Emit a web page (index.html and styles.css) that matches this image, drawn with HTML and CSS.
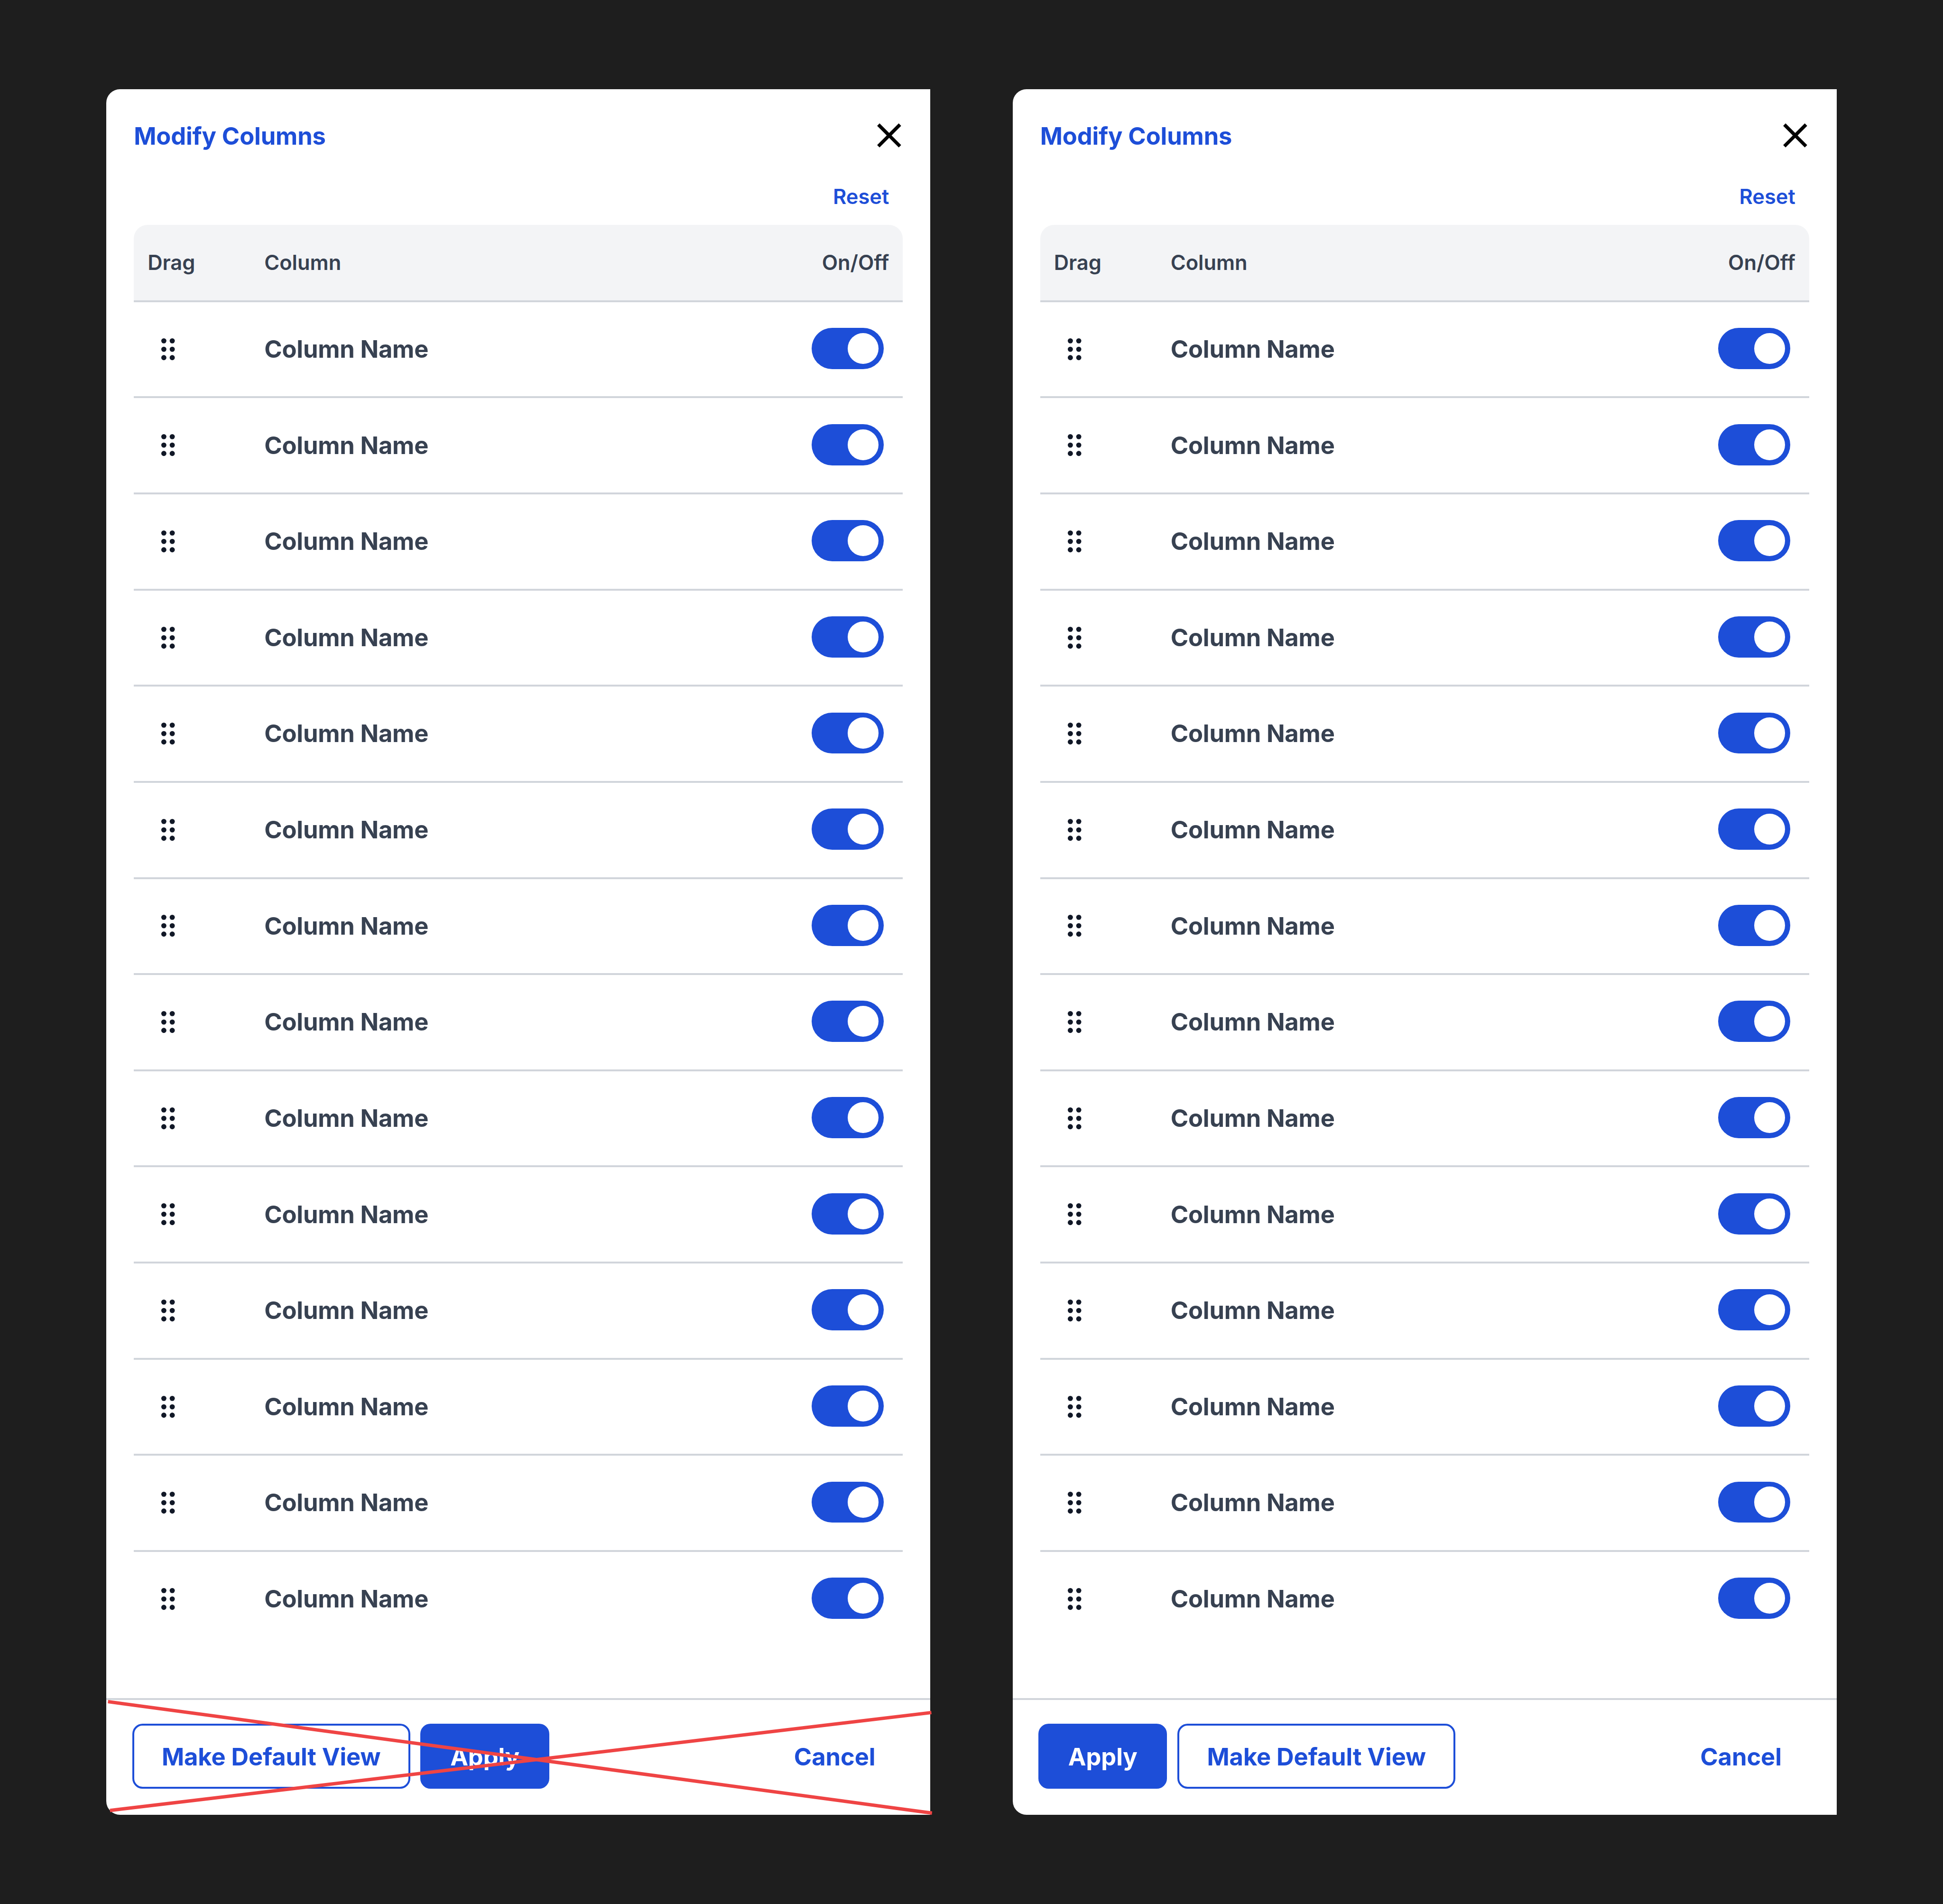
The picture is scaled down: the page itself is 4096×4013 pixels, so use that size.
FILE: index.html
```html
<!DOCTYPE html>
<html lang="en">
<head>
<meta charset="utf-8">
<title>Modify Columns</title>
<link rel="stylesheet" href="styles.css">
</head>
<body>
<svg class="sprite" aria-hidden="true">
  <symbol id="grip" viewBox="0 0 24 24">
    <circle cx="9.5" cy="7" r="1.5"/><circle cx="14.4" cy="7" r="1.5"/>
    <circle cx="9.5" cy="11.9" r="1.5"/><circle cx="14.4" cy="11.9" r="1.5"/>
    <circle cx="9.5" cy="16.8" r="1.5"/><circle cx="14.4" cy="16.8" r="1.5"/>
  </symbol>
  <symbol id="close" viewBox="0 0 24 24">
    <path d="M19 6.41 17.59 5 12 10.59 6.41 5 5 6.41 10.59 12 5 17.59 6.41 19 12 13.41 17.59 19 19 17.59 13.41 12z"/>
  </symbol>
</svg>
<main class="canvas">
  <section class="panel">
    <header class="panel-header"><h2 class="title">Modify Columns</h2><svg class="icon close"><use href="#close"/></svg></header>
    <div class="reset-row"><a class="reset">Reset</a></div>
    <div class="table">
      <div class="table-head"><span class="col-drag">Drag</span><span class="col-name">Column</span><span>On/Off</span></div>
      <div class="row"><span class="col-drag"><svg class="icon"><use href="#grip"/></svg></span><span class="col-name">Column Name</span><span class="toggle"><span class="knob"></span></span></div>
      <div class="row"><span class="col-drag"><svg class="icon"><use href="#grip"/></svg></span><span class="col-name">Column Name</span><span class="toggle"><span class="knob"></span></span></div>
      <div class="row"><span class="col-drag"><svg class="icon"><use href="#grip"/></svg></span><span class="col-name">Column Name</span><span class="toggle"><span class="knob"></span></span></div>
      <div class="row"><span class="col-drag"><svg class="icon"><use href="#grip"/></svg></span><span class="col-name">Column Name</span><span class="toggle"><span class="knob"></span></span></div>
      <div class="row"><span class="col-drag"><svg class="icon"><use href="#grip"/></svg></span><span class="col-name">Column Name</span><span class="toggle"><span class="knob"></span></span></div>
      <div class="row"><span class="col-drag"><svg class="icon"><use href="#grip"/></svg></span><span class="col-name">Column Name</span><span class="toggle"><span class="knob"></span></span></div>
      <div class="row"><span class="col-drag"><svg class="icon"><use href="#grip"/></svg></span><span class="col-name">Column Name</span><span class="toggle"><span class="knob"></span></span></div>
      <div class="row"><span class="col-drag"><svg class="icon"><use href="#grip"/></svg></span><span class="col-name">Column Name</span><span class="toggle"><span class="knob"></span></span></div>
      <div class="row"><span class="col-drag"><svg class="icon"><use href="#grip"/></svg></span><span class="col-name">Column Name</span><span class="toggle"><span class="knob"></span></span></div>
      <div class="row"><span class="col-drag"><svg class="icon"><use href="#grip"/></svg></span><span class="col-name">Column Name</span><span class="toggle"><span class="knob"></span></span></div>
      <div class="row"><span class="col-drag"><svg class="icon"><use href="#grip"/></svg></span><span class="col-name">Column Name</span><span class="toggle"><span class="knob"></span></span></div>
      <div class="row"><span class="col-drag"><svg class="icon"><use href="#grip"/></svg></span><span class="col-name">Column Name</span><span class="toggle"><span class="knob"></span></span></div>
      <div class="row"><span class="col-drag"><svg class="icon"><use href="#grip"/></svg></span><span class="col-name">Column Name</span><span class="toggle"><span class="knob"></span></span></div>
      <div class="row"><span class="col-drag"><svg class="icon"><use href="#grip"/></svg></span><span class="col-name">Column Name</span><span class="toggle"><span class="knob"></span></span></div>
    </div>
    <footer class="panel-footer">
      <button class="btn btn-outline">Make Default View</button>
      <button class="btn btn-primary">Apply</button>
      <button class="btn btn-text">Cancel</button>
      <svg class="strike" viewBox="0 0 1920 272"><path d="M4 8.3 1924.3 268M8.6 261.8 1922.9 33.7"/></svg>
    </footer>
  </section>
  <section class="panel">
    <header class="panel-header"><h2 class="title">Modify Columns</h2><svg class="icon close"><use href="#close"/></svg></header>
    <div class="reset-row"><a class="reset">Reset</a></div>
    <div class="table">
      <div class="table-head"><span class="col-drag">Drag</span><span class="col-name">Column</span><span>On/Off</span></div>
      <div class="row"><span class="col-drag"><svg class="icon"><use href="#grip"/></svg></span><span class="col-name">Column Name</span><span class="toggle"><span class="knob"></span></span></div>
      <div class="row"><span class="col-drag"><svg class="icon"><use href="#grip"/></svg></span><span class="col-name">Column Name</span><span class="toggle"><span class="knob"></span></span></div>
      <div class="row"><span class="col-drag"><svg class="icon"><use href="#grip"/></svg></span><span class="col-name">Column Name</span><span class="toggle"><span class="knob"></span></span></div>
      <div class="row"><span class="col-drag"><svg class="icon"><use href="#grip"/></svg></span><span class="col-name">Column Name</span><span class="toggle"><span class="knob"></span></span></div>
      <div class="row"><span class="col-drag"><svg class="icon"><use href="#grip"/></svg></span><span class="col-name">Column Name</span><span class="toggle"><span class="knob"></span></span></div>
      <div class="row"><span class="col-drag"><svg class="icon"><use href="#grip"/></svg></span><span class="col-name">Column Name</span><span class="toggle"><span class="knob"></span></span></div>
      <div class="row"><span class="col-drag"><svg class="icon"><use href="#grip"/></svg></span><span class="col-name">Column Name</span><span class="toggle"><span class="knob"></span></span></div>
      <div class="row"><span class="col-drag"><svg class="icon"><use href="#grip"/></svg></span><span class="col-name">Column Name</span><span class="toggle"><span class="knob"></span></span></div>
      <div class="row"><span class="col-drag"><svg class="icon"><use href="#grip"/></svg></span><span class="col-name">Column Name</span><span class="toggle"><span class="knob"></span></span></div>
      <div class="row"><span class="col-drag"><svg class="icon"><use href="#grip"/></svg></span><span class="col-name">Column Name</span><span class="toggle"><span class="knob"></span></span></div>
      <div class="row"><span class="col-drag"><svg class="icon"><use href="#grip"/></svg></span><span class="col-name">Column Name</span><span class="toggle"><span class="knob"></span></span></div>
      <div class="row"><span class="col-drag"><svg class="icon"><use href="#grip"/></svg></span><span class="col-name">Column Name</span><span class="toggle"><span class="knob"></span></span></div>
      <div class="row"><span class="col-drag"><svg class="icon"><use href="#grip"/></svg></span><span class="col-name">Column Name</span><span class="toggle"><span class="knob"></span></span></div>
      <div class="row"><span class="col-drag"><svg class="icon"><use href="#grip"/></svg></span><span class="col-name">Column Name</span><span class="toggle"><span class="knob"></span></span></div>
    </div>
    <footer class="panel-footer">
      <button class="btn btn-primary">Apply</button>
      <button class="btn btn-outline">Make Default View</button>
      <button class="btn btn-text">Cancel</button>
    </footer>
  </section>
</main>
</body>
</html>
```
FILE: styles.css
```css
/* 1rem is ten layout units */
html {
  font-size: 36.1837px;
}

*, *::before, *::after {
  box-sizing: border-box;
}

body {
  margin: 0;
  background: #1e1e1e;
  font-family: Inter, "Liberation Sans", sans-serif;
  color: #374151;
}

.sprite {
  display: none;
}

.canvas {
  display: flex;
  gap: 4.8rem;
  height: 4013px;
  padding: 5.2rem 0 0 6.2rem;
  overflow: hidden;
}

.panel {
  display: flex;
  flex: none;
  flex-direction: column;
  width: 48rem;
  height: 100.5rem;
  background: #fff;
  border-radius: 0.8rem 0 0 0.8rem;
}

.icon {
  display: block;
  width: 2.4rem;
  height: 2.4rem;
  fill: #111827;
}

.close {
  fill: #000;
}

.panel-header {
  display: flex;
  align-items: center;
  justify-content: space-between;
  height: 5.4rem;
  padding: 0 1.2rem 0 1.6rem;
}

.title {
  margin: 0;
  padding-top: 0.08rem;
  font-size: 1.4rem;
  font-weight: 700;
  line-height: 2rem;
  letter-spacing: -0.0025em;
  color: #1d4ed8;
}

.reset-row {
  display: flex;
  justify-content: flex-end;
  height: 2.5rem;
  padding-right: 2.4rem;
}

.reset {
  font-size: 1.2rem;
  font-weight: 600;
  line-height: 1.7rem;
  color: #1d4ed8;
}

.table {
  flex: 1;
  margin: 0 1.6rem;
}

.table-head {
  display: flex;
  align-items: center;
  height: 4.5rem;
  padding: 2px 0.8rem 0;
  background: #f3f4f6;
  border-bottom: 4px solid #d1d5db;
  border-radius: 0.8rem 0.8rem 0 0;
  font-size: 1.2rem;
  font-weight: 600;
  line-height: 1.6rem;
}

.row {
  display: flex;
  align-items: center;
  height: 5.6rem;
  padding: 0 1.11rem 0 0.8rem;
  border-bottom: 4px solid #d1d5db;
  font-size: 1.4rem;
  font-weight: 700;
  line-height: 2rem;
  letter-spacing: -0.0035em;
}

.row:last-child {
  border-bottom-color: transparent;
}

.col-drag {
  width: 6.8rem;
}

.col-name {
  flex: 1;
}

.toggle {
  display: flex;
  align-self: flex-start;
  justify-content: flex-end;
  width: 4.2rem;
  height: 2.4rem;
  margin-top: 1.5rem;
  padding: 0.3rem;
  background: #1d4ed8;
  border-radius: 1.2rem;
}

.knob {
  width: 1.8rem;
  height: 1.8rem;
  background: #fff;
  border-radius: 50%;
}

.panel-footer {
  position: relative;
  display: flex;
  gap: 0.6rem;
  height: 6.8rem;
  padding: calc(1.5rem - 4px) 1.5rem 1.5rem;
  border-top: 4px solid #d1d5db;
}

.btn {
  height: 3.8rem;
  padding: 0.08rem calc(1.7rem - 4px) 0;
  border: 4px solid transparent;
  border-radius: 0.6rem;
  background: none;
  font: 700 1.4rem/2rem Inter, "Liberation Sans", sans-serif;
  letter-spacing: -0.0015em;
  color: #1d4ed8;
  white-space: nowrap;
}

.btn-outline {
  width: 16.2rem;
  border-color: #1d4ed8;
}

.btn-primary {
  width: 7.5rem;
  background: #1d4ed8;
  border-color: #1d4ed8;
  color: #fff;
}

.btn-text {
  margin-left: auto;
}

/* Cross drawn over the rejected button order */
.strike {
  position: absolute;
  top: -4px;
  left: 0;
  width: 48rem;
  height: 6.8rem;
  overflow: visible;
  fill: none;
  stroke: #ef4444;
  stroke-width: 8;
}
```
